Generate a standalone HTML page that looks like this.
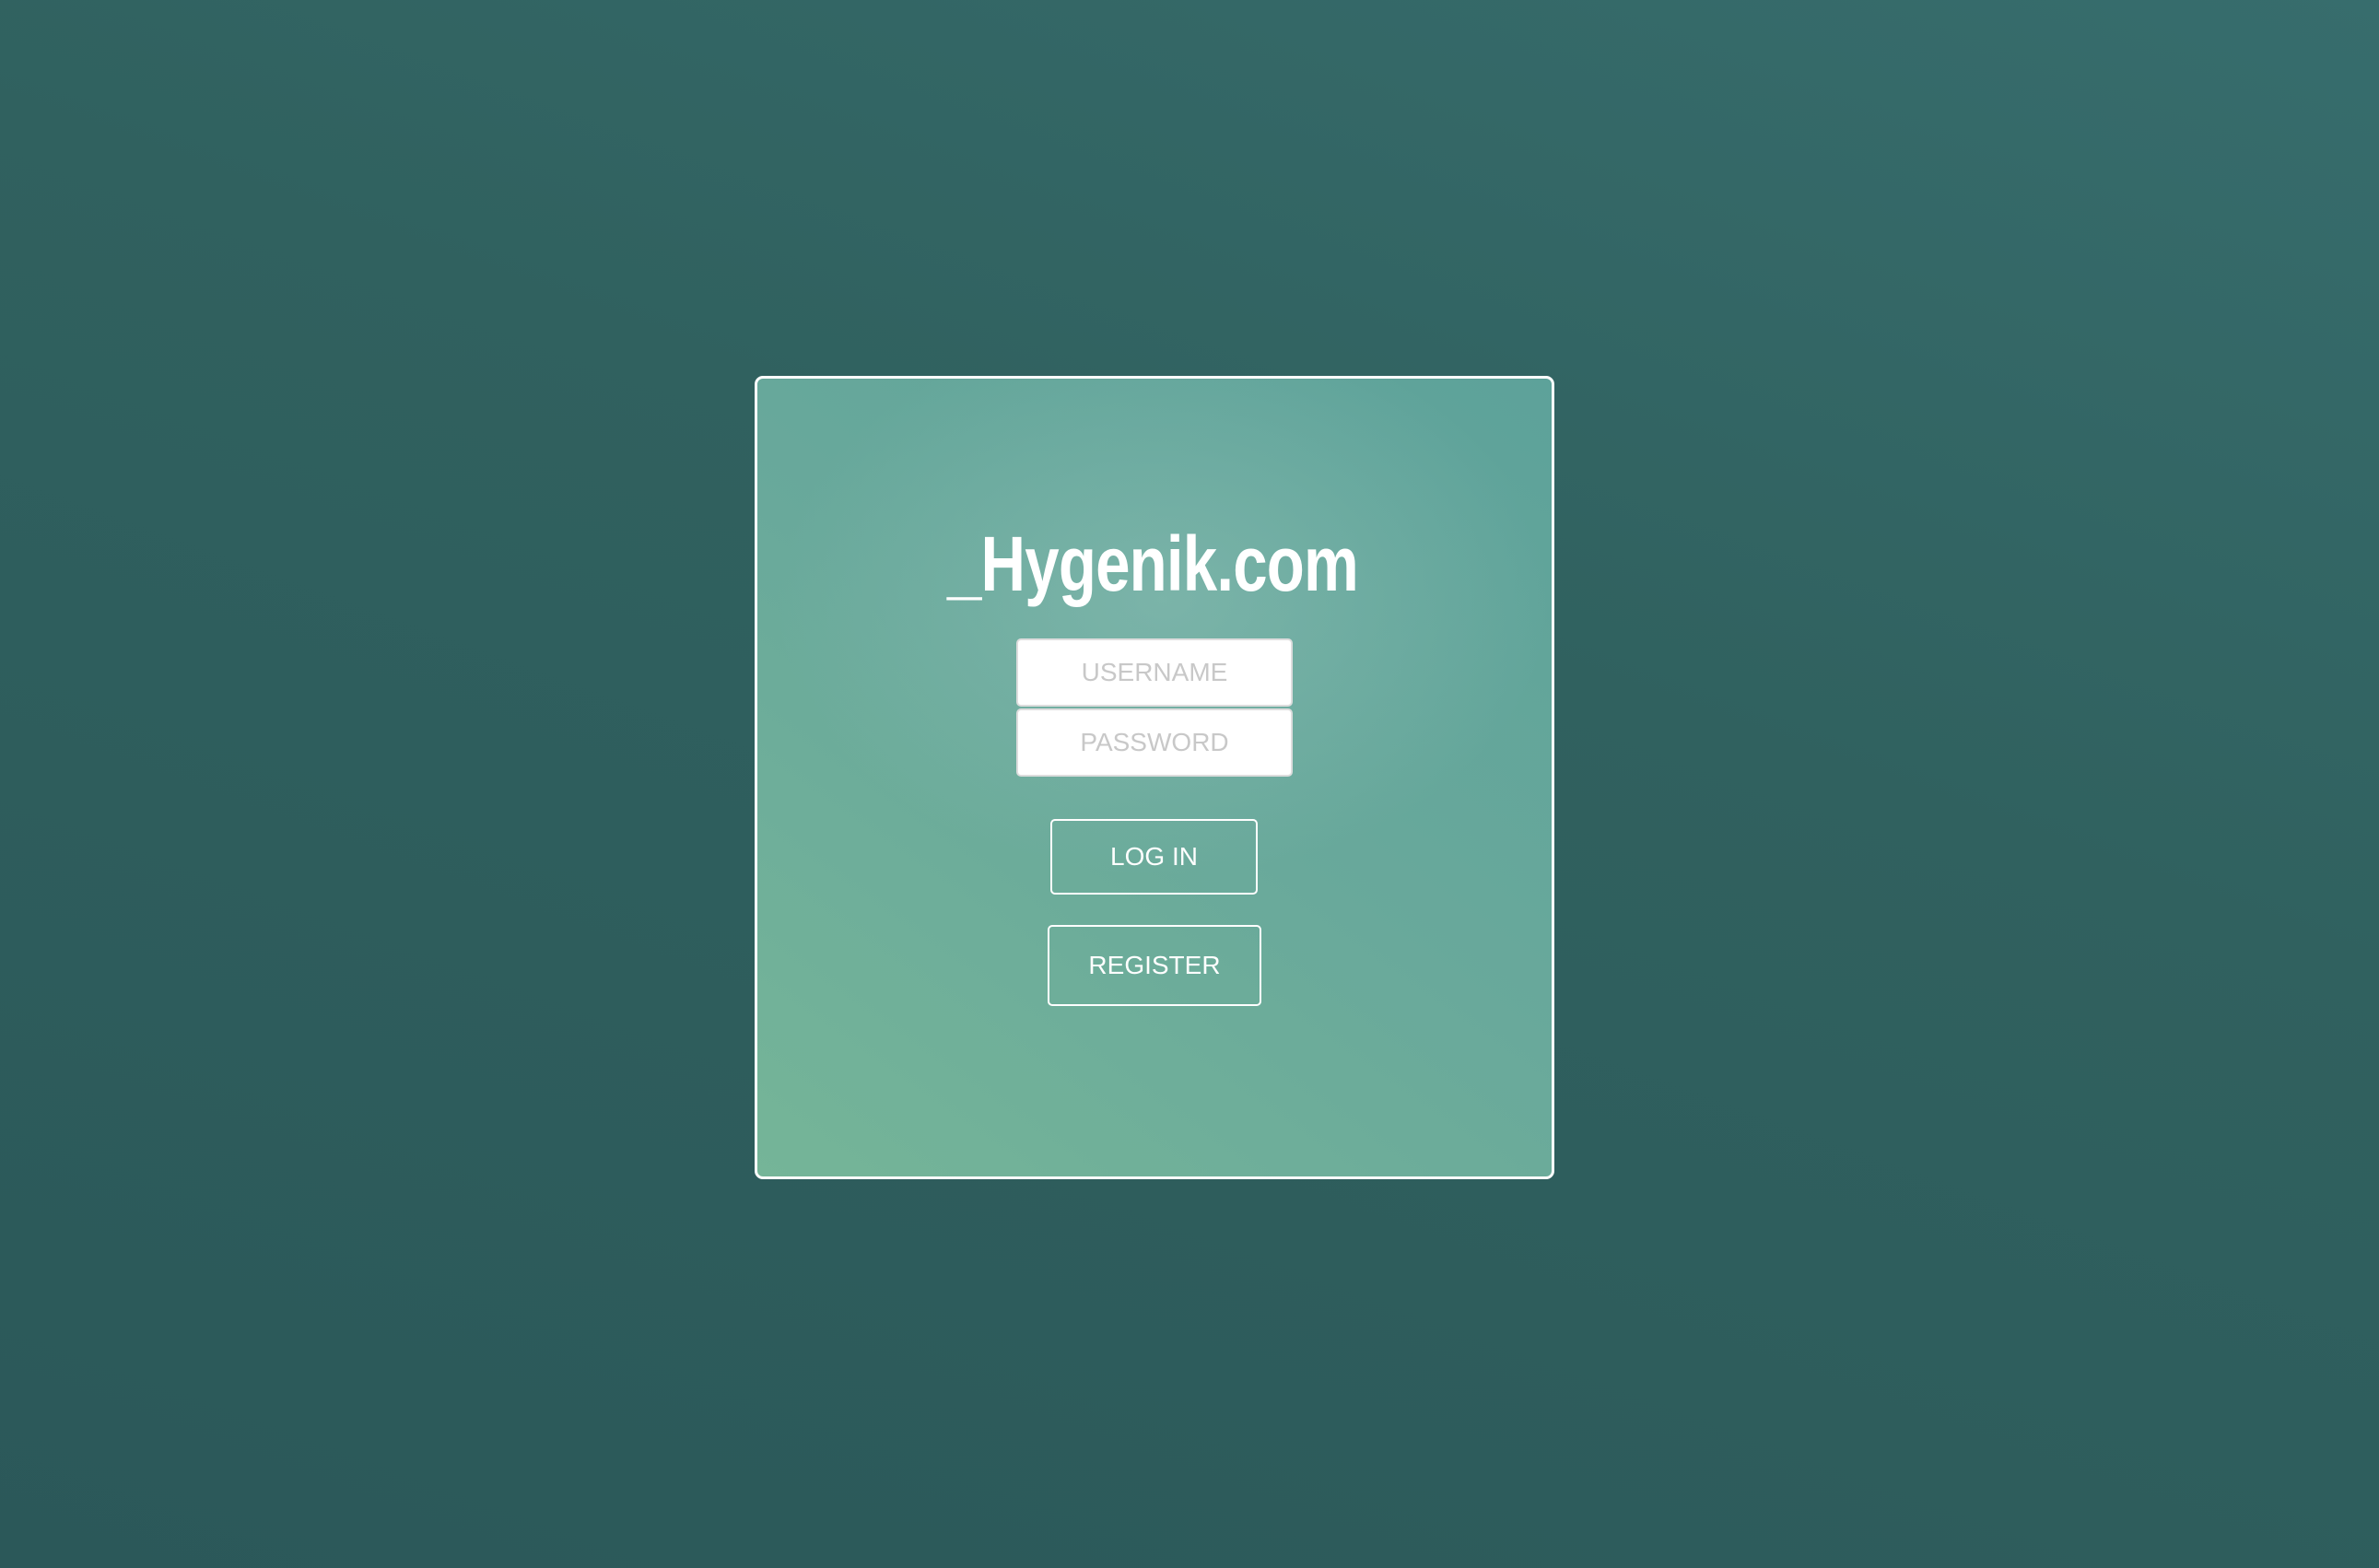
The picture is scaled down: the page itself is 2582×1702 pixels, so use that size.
<!DOCTYPE html>
<html><head><meta charset="utf-8"><style>
html,body{margin:0;padding:0}
body{width:2582px;height:1702px;position:relative;overflow:hidden;
background:linear-gradient(200deg,#376d6d 0%,#30615f 40%,#2b5859 100%);font-family:"Liberation Sans",sans-serif}
.card{position:absolute;left:819px;top:408px;width:862px;height:866px;border:3px solid #fff;border-radius:9px;
background:radial-gradient(ellipse 420px 300px at 440px 240px,rgba(140,190,180,0.55),rgba(140,190,180,0) 100%),
linear-gradient(35deg,#75b598 0%,#69a99b 50%,#5da29a 100%)}
.title{position:absolute;left:851px;top:562px;width:800px;text-align:center;color:#fff;font-size:84px;line-height:100px;font-weight:bold;
transform:scaleX(0.8);transform-origin:center;letter-spacing:-1px;white-space:nowrap}
.inp{position:absolute;left:1103px;width:296px;height:70px;background:#fff;border:2px solid #ddd;border-radius:5px;
color:#c8c8c8;font-size:28px;text-align:center;line-height:70px}
.btn{position:absolute;border:2px solid #fff;border-radius:5px;color:#fff;font-size:28px;text-align:center}
</style></head><body>
<div class="card"></div>
<div class="title">_Hygenik.com</div>
<div class="inp" style="top:693px">USERNAME</div>
<div class="inp" style="top:769px">PASSWORD</div>
<div class="btn" style="left:1140px;top:889px;width:221px;height:78px;line-height:78px">LOG IN</div>
<div class="btn" style="left:1137px;top:1004px;width:228px;height:84px;line-height:84px">REGISTER</div>
</body></html>
